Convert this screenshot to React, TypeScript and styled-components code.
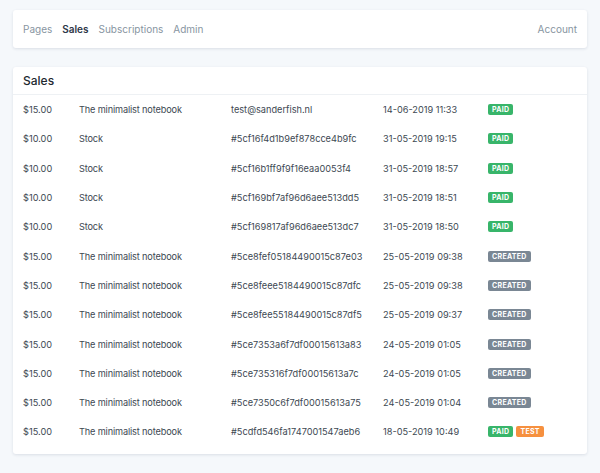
import React from "react";
import styled, { createGlobalStyle } from "styled-components";

const Global = createGlobalStyle`
  html, body { margin: 0; padding: 0; background: #f5f8fb; }
  body { font-family: Inter, "Noto Sans", sans-serif; color: #3d4852; -webkit-font-smoothing: antialiased; }
`;

const Page = styled.div`
  padding: 10px 13px 20px;
  display: flex;
  flex-direction: column;
  gap: 19px;
`;

const Card = styled.div`
  background: #fff;
  border-radius: 3px;
  box-shadow: 0 1px 3px rgba(30, 50, 80, 0.12);
`;

const Nav = styled(Card)`
  height: 38px;
  display: flex;
  align-items: center;
  padding: 0 10px;
  font-size: 10px;
`;

const NavLink = styled.a<{ $active?: boolean }>`
  color: ${(p) => (p.$active ? "#2d3748" : "#8795a1")};
  font-weight: ${(p) => (p.$active ? 600 : 400)};
  margin-right: 10px;
  text-decoration: none;
  &:last-child { margin-right: 0; }
`;

const Spacer = styled.div`
  flex: 1;
`;

const Header = styled.div`
  height: 27px;
  display: flex;
  align-items: center;
  padding: 0 10px;
  font-size: 12px;
  font-weight: 500;
  color: #22292f;
  border-bottom: 1px solid #eef1f4;
`;

const Table = styled.div`
  padding: 0 0 7px;
`;

const Row = styled.div`
  display: grid;
  grid-template-columns: 56px 152px 152px 105px 1fr;
  align-items: center;
  height: 29.3px;
  padding: 0 10px;
  font-size: 9.2px;
  color: #3d4852;
`;

const Product = styled.span`
  letter-spacing: -0.15px;
`;

const Badges = styled.div`
  display: flex;
  gap: 3px;
`;

const Badge = styled.span<{ $kind: "PAID" | "CREATED" | "TEST" }>`
  display: inline-block;
  padding: 2px 4px 2px;
  border-radius: 2px;
  font-size: 7px;
  font-weight: 700;
  letter-spacing: 0.3px;
  color: #fff;
  line-height: 7px;
  background: ${(p) =>
    p.$kind === "PAID" ? "#38b56a" : p.$kind === "TEST" ? "#f6903f" : "#7a8794"};
`;

type Sale = { price: string; product: string; ref: string; date: string; badges: ("PAID" | "CREATED" | "TEST")[] };

const sales: Sale[] = [
  { price: "$15.00", product: "The minimalist notebook", ref: "test@sanderfish.nl", date: "14-06-2019 11:33", badges: ["PAID"] },
  { price: "$10.00", product: "Stock", ref: "#5cf16f4d1b9ef878cce4b9fc", date: "31-05-2019 19:15", badges: ["PAID"] },
  { price: "$10.00", product: "Stock", ref: "#5cf16b1ff9f9f16eaa0053f4", date: "31-05-2019 18:57", badges: ["PAID"] },
  { price: "$10.00", product: "Stock", ref: "#5cf169bf7af96d6aee513dd5", date: "31-05-2019 18:51", badges: ["PAID"] },
  { price: "$10.00", product: "Stock", ref: "#5cf169817af96d6aee513dc7", date: "31-05-2019 18:50", badges: ["PAID"] },
  { price: "$15.00", product: "The minimalist notebook", ref: "#5ce8fef05184490015c87e03", date: "25-05-2019 09:38", badges: ["CREATED"] },
  { price: "$15.00", product: "The minimalist notebook", ref: "#5ce8feee5184490015c87dfc", date: "25-05-2019 09:38", badges: ["CREATED"] },
  { price: "$15.00", product: "The minimalist notebook", ref: "#5ce8fee55184490015c87df5", date: "25-05-2019 09:37", badges: ["CREATED"] },
  { price: "$15.00", product: "The minimalist notebook", ref: "#5ce7353a6f7df00015613a83", date: "24-05-2019 01:05", badges: ["CREATED"] },
  { price: "$15.00", product: "The minimalist notebook", ref: "#5ce735316f7df00015613a7c", date: "24-05-2019 01:05", badges: ["CREATED"] },
  { price: "$15.00", product: "The minimalist notebook", ref: "#5ce7350c6f7df00015613a75", date: "24-05-2019 01:04", badges: ["CREATED"] },
  { price: "$15.00", product: "The minimalist notebook", ref: "#5cdfd546fa1747001547aeb6", date: "18-05-2019 10:49", badges: ["PAID", "TEST"] },
];

export default function App() {
  return (
    <>
      <Global />
      <Page>
        <Nav>
          <NavLink>Pages</NavLink>
          <NavLink $active>Sales</NavLink>
          <NavLink>Subscriptions</NavLink>
          <NavLink>Admin</NavLink>
          <Spacer />
          <NavLink>Account</NavLink>
        </Nav>
        <Card>
          <Header>Sales</Header>
          <Table>
            {sales.map((s, i) => (
              <Row key={i}>
                <span>{s.price}</span>
                <Product>{s.product}</Product>
                <span>{s.ref}</span>
                <span>{s.date}</span>
                <Badges>
                  {s.badges.map((b) => (
                    <Badge key={b} $kind={b}>{b}</Badge>
                  ))}
                </Badges>
              </Row>
            ))}
          </Table>
        </Card>
      </Page>
    </>
  );
}
